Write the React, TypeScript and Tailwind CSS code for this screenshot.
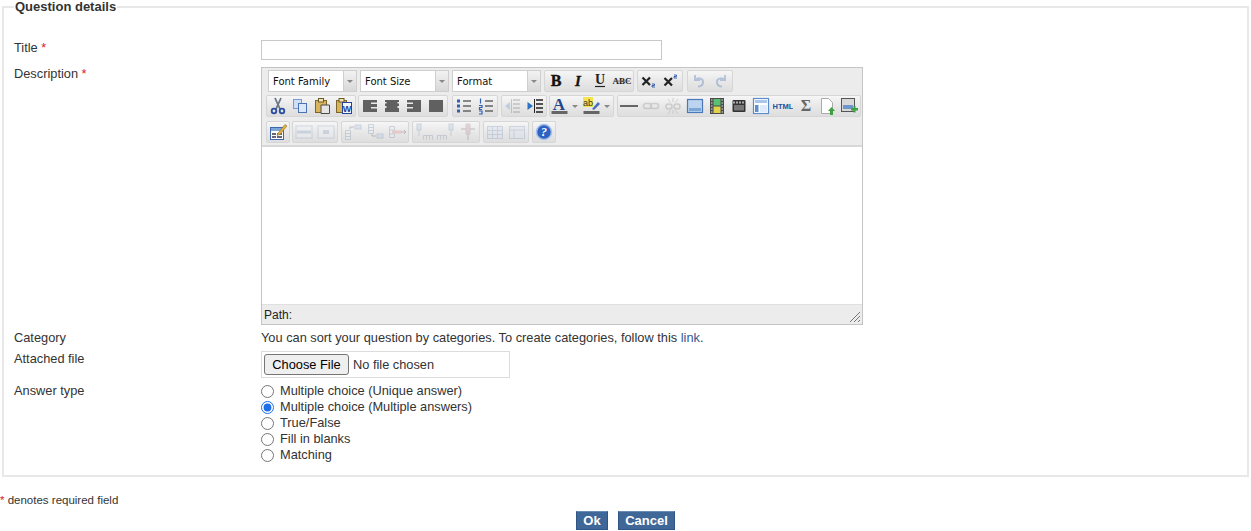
import type { ReactNode } from 'react';

// Toolbar pieces
function Group({ children }: { children: ReactNode }) {
  return (
    <div className="flex h-full items-center rounded-[2px] border border-[#d6d6d6] bg-gradient-to-b from-[#f6f6f6] via-[#e8e8e8] to-[#dedede]">
      {children}
    </div>
  );
}

function Ico({ children, off, wide }: { children: ReactNode; off?: boolean; wide?: boolean }) {
  return (
    <div className={`flex h-full shrink-0 items-center justify-center ${wide ? 'w-[31.5px] justify-start' : 'w-[22px]'} ${off ? 'opacity-30' : ''}`}>
      <svg viewBox="0 0 20 20" className="h-5 w-5 shrink-0">
        {children}
      </svg>
      {wide && <span className="ml-[2px] h-0 w-0 border-x-[3px] border-t-[3px] border-x-transparent border-t-[#888]" />}
    </div>
  );
}

function Select({ label }: { label: string }) {
  return (
    <div className="flex h-full w-[89px] border border-[#cfcfcf] bg-white">
      <div className="flex-1 pl-1 pt-px font-['DejaVu_Sans',sans-serif] text-[10px] leading-[20px] text-[#111]">{label}</div>
      <div className="flex w-[13px] items-center justify-center border-l border-[#cfcfcf] bg-gradient-to-b from-[#f2f2f2] to-[#d8d8d8]">
        <span className="h-0 w-0 border-x-[3px] border-t-[3px] border-x-transparent border-t-[#888]" />
      </div>
    </div>
  );
}

const dark = '#606060';

// Row 1
const Bold = () => <text x="10" y="15" textAnchor="middle" fontFamily="'Liberation Serif', serif" fontWeight="700" fontSize="16" fill="#111" stroke="#111" strokeWidth="0.4">B</text>;
const Italic = () => <text x="10" y="15" textAnchor="middle" fontFamily="'Liberation Serif', serif" fontWeight="700" fontStyle="italic" fontSize="15" fill="#111" stroke="#111" strokeWidth="0.3">I</text>;
const Under = () => (
  <>
    <text x="10" y="13" textAnchor="middle" fontFamily="'Liberation Serif', serif" fontWeight="700" fontSize="14" fill="#222">U</text>
    <path d="M5 15.500h10" stroke="#222" strokeWidth="1.200" />
  </>
);
const Strike = () => (
  <>
    <text x="10" y="13" textAnchor="middle" fontFamily="'Liberation Serif', serif" fontWeight="700" fontSize="9" fill="#222">ABC</text>
    <path d="M2 10h16" stroke="#666" strokeWidth="0.800" />
  </>
);
const Sub = () => (
  <>
    <path d="M3.500 6.500l7.500 7.500M11 6.500L3.500 14" stroke="#222" strokeWidth="2.200" />
    <path d="M13 13h2.500v1.500H13v1.500h3" stroke="#2a55a8" strokeWidth="0.900" fill="none" />
  </>
);
const Sup = () => (
  <>
    <path d="M3.500 7l7.500 7.500M11 7l-7.500 7.500" stroke="#222" strokeWidth="2.200" />
    <path d="M13 4h2.500v1.500H13V7h3" stroke="#2a55a8" strokeWidth="0.900" fill="none" />
  </>
);
const Undo = () => <path d="M6 4v5h5M6.500 9c3-3 8-1.500 7.500 2.500-.3 2.500-2.500 4-5 4" fill="none" stroke="#3a68b0" strokeWidth="2" />;
const Redo = () => <path d="M14 4v5H9M13.500 9c-3-3-8-1.500-7.500 2.500.3 2.500 2.500 4 5 4" fill="none" stroke="#3a68b0" strokeWidth="2" />;

// Row 2
const Cut = () => (
  <>
    <path d="M7 2l5 11M13 2L8 13" stroke="#6b7686" strokeWidth="1.800" />
    <circle cx="6" cy="15" r="2.300" fill="none" stroke="#2a4ca0" strokeWidth="1.800" />
    <circle cx="14" cy="15" r="2.300" fill="none" stroke="#2a4ca0" strokeWidth="1.800" />
  </>
);
const Copy = () => (
  <>
    <rect x="3.500" y="3.500" width="8" height="9" fill="#cfe0f6" stroke="#7c9bcc" />
    <rect x="8.500" y="7.500" width="8" height="9" fill="#dbe8fa" stroke="#4a72b5" />
  </>
);
const Paste = () => (
  <>
    <rect x="3.500" y="4.500" width="11" height="12" fill="#d9b45c" stroke="#7d6428" />
    <rect x="6.500" y="2.500" width="5" height="3.500" fill="#efe3b5" stroke="#6b5a2a" />
    <path d="M9 9h8.500v8.500H9z" fill="#e5e5e5" stroke="#4c4c4c" />
  </>
);
const PasteWord = () => (
  <>
    <rect x="2.500" y="4.500" width="10" height="12" fill="#d9b45c" stroke="#7d6428" />
    <rect x="5" y="2.500" width="5" height="3.500" fill="#efe3b5" stroke="#6b5a2a" />
    <rect x="8.500" y="6.500" width="9" height="11" fill="#f2f6fc" stroke="#26459a" />
    <text x="13" y="15.500" textAnchor="middle" fontFamily="'Liberation Sans', sans-serif" fontWeight="700" fontSize="9" fill="#1d3f9a">W</text>
  </>
);
const Align = ({ d }: { d: string }) => <path d={d} fill={dark} />;
const Left = () => <Align d="M3 4h14v12H3zM11 6.500v1.500h6V6.500zM11 11v1.500h6V11z" />;
const Center = () => <Align d="M3 4h14v2h-1.500v1.500H17V10h-1.500v2H17v4H3v-4h1.500v-2H3V7.500h1.500V6H3z" />;
const Right = () => <Align d="M3 4h14v12H3zM3 6.500v1.500h6V6.500zM3 11v1.500h6V11z" />;
const Justify = () => <Align d="M3 4h14v12H3z" />;
const Bullets = () => (
  <>
    <path d="M9 5h8M9 10h8M9 15h8" stroke="#666" strokeWidth="1.600" />
    <path d="M3 3.500h3v3H3zM3 8.500h3v3H3zM3 13.500h3v3H3z" fill="#3060b0" />
  </>
);
const Numbers = () => (
  <>
    <path d="M9 5h8M9 10h8M9 15h8" stroke="#666" strokeWidth="1.600" />
    <path d="M4.500 2.500v5M3 9.500h3v2H3.500v2H6M3 15h3v3H3" stroke="#3060b0" strokeWidth="1.200" fill="none" />
  </>
);
const Outdent = () => (
  <>
    <path d="M10 4h7M10 8h7M10 12h7M10 16h7" stroke="#666" strokeWidth="1.500" />
    <path d="M2 10l5-4v8z" fill="#5d90d8" />
    <path d="M8.500 3v14" stroke="#666" />
  </>
);
const Indent = () => (
  <>
    <path d="M11 4h7M11 8h7M11 12h7M11 16h7" stroke="#222" strokeWidth="1.500" />
    <path d="M8 10L2.500 6v8z" fill="#2a70c8" />
    <path d="M9.500 3v14" stroke="#222" />
  </>
);
const ForeColor = () => (
  <>
    <text x="9" y="13.500" textAnchor="middle" fontFamily="'Liberation Serif', serif" fontWeight="700" fontSize="17" fill="#24468c">A</text>
    <rect x="1.500" y="15" width="16" height="3" fill="#666" />
  </>
);
const BackColor = () => (
  <>
    <rect x="1" y="1" width="10" height="10" fill="#f2e64c" />
    <text x="6" y="9.500" textAnchor="middle" fontFamily="'Liberation Sans', sans-serif" fontSize="9" fill="#333">ab</text>
    <path d="M10 13l6-7 2 2-6 6z" fill="#4a6fb8" />
    <rect x="1.500" y="15" width="16" height="3" fill="#666" />
  </>
);
const Rule = () => <path d="M1 10h18" stroke="#666" strokeWidth="2" />;
const LinkIco = () => (
  <>
    <rect x="2.500" y="7.500" width="8" height="5" rx="2.500" fill="none" stroke="#8a8a8a" strokeWidth="1.500" />
    <rect x="9.500" y="7.500" width="8" height="5" rx="2.500" fill="none" stroke="#8a8a8a" strokeWidth="1.500" />
  </>
);
const Unlink = () => (
  <>
    <rect x="3" y="8" width="6" height="5" rx="2.500" fill="none" stroke="#8a8a8a" strokeWidth="1.500" />
    <rect x="11" y="8" width="6" height="5" rx="2.500" fill="none" stroke="#8a8a8a" strokeWidth="1.500" />
    <path d="M10 2v4M10 14v4M5 3l2.500 3.500M15 3l-2.500 3.500M5 18l2.500-3.500M15 18l-2.500-3.500" stroke="#8a8a8a" />
  </>
);
const Image = () => (
  <>
    <rect x="2.500" y="3.500" width="15" height="13" fill="#bcd4f0" stroke="#4a78b8" strokeWidth="1.200" />
    <rect x="4" y="12" width="12" height="3" fill="#7aa6d8" />
  </>
);
const Film = () => (
  <>
    <rect x="3" y="2" width="14" height="16" fill="#4a4a4a" />
    <rect x="6.500" y="3" width="7" height="6.500" fill="#58c070" />
    <rect x="6.500" y="10.500" width="7" height="6.500" fill="#e0d24a" />
    <path d="M4 4h1.500M4 7h1.500M4 10h1.500M4 13h1.500M4 16h1.500M14.500 4H16M14.500 7H16M14.500 10H16M14.500 13H16M14.500 16H16" stroke="#ddd" />
  </>
);
const Clapper = () => (
  <>
    <rect x="3.500" y="4" width="13" height="12" rx="1" fill="#333" />
    <path d="M5 5.500v2M8 5.500v2M11 5.500v2M14 5.500v2" stroke="#eee" strokeWidth="1.300" />
    <rect x="5" y="9" width="10" height="5.500" fill="#777" />
  </>
);
const Template = () => (
  <>
    <rect x="2.500" y="2.500" width="15" height="15" fill="#fff" stroke="#5d8ccc" strokeWidth="1.200" />
    <rect x="4" y="4" width="12" height="3" fill="#a8c6ea" />
    <rect x="4" y="9" width="3.500" height="7" fill="#5c8fcc" />
    <rect x="9" y="9" width="7" height="7" fill="#dfeaf8" />
  </>
);
const Html = () => <text x="10" y="13" textAnchor="middle" fontFamily="'Liberation Sans', sans-serif" fontWeight="700" fontSize="7.500" fill="#24509c">HTML</text>;
const Sigma = () => <text x="11" y="15" textAnchor="middle" fontFamily="'Liberation Serif', serif" fontWeight="700" fontSize="16" fill="#666">Σ</text>;
const DocAdd = () => (
  <>
    <path d="M4.500 2.500h7l4 4v11h-11z" fill="#fff" stroke="#aaa" />
    <path d="M13 19v-4h-2l3.500-4 3.500 4h-2v4z" fill="#3fa040" />
  </>
);
const ImgAdd = () => (
  <>
    <rect x="2.500" y="2.500" width="13" height="13" fill="#d8d8d8" stroke="#555" />
    <rect x="4" y="9" width="10" height="4" fill="#6f96cc" />
    <path d="M12 12h2.500v-2h2v2H19v2.500h-2.500v2h-2v-2H12z" fill="#3fa040" />
  </>
);

// Row 3
const EditHtml = () => (
  <>
    <rect x="2.500" y="5.500" width="13" height="12" fill="#fff" stroke="#3c66ad" />
    <path d="M3 6h12v3H3z" fill="#7aa6d8" />
    <path d="M4 11h4v2H4zM9 11h5v2H9zM4 14h4v2H4zM9 14h5v2H9z" fill="#667" />
    <path d="M10 11L17 2.500l2 1.500-7 8.500-3 1z" fill="#e0b040" stroke="#7d6428" strokeWidth="0.500" />
  </>
);
const Row1 = () => (
  <>
    <rect x="2" y="4" width="16" height="12" fill="#eef3fa" stroke="#8aa0c0" />
    <rect x="3" y="8.500" width="14" height="3" fill="#8aa0c0" />
  </>
);
const Cell = () => (
  <>
    <rect x="2" y="4" width="16" height="12" fill="#eef3fa" stroke="#8aa0c0" />
    <rect x="7" y="8" width="6" height="4" fill="#8aa0c0" />
  </>
);
const RowBefore = () => (
  <>
    <path d="M2.500 8.500h5v9h-5zM2.500 11.500h5M2.500 14.500h5" fill="#eef3fa" stroke="#7d8fa8" />
    <rect x="12" y="3" width="6" height="4" fill="#a8c6ea" stroke="#7d8fa8" />
    <path d="M11 5H7v2" stroke="#555" fill="none" />
  </>
);
const RowAfter = () => (
  <>
    <path d="M3.500 2.500h5v9h-5zM3.500 5.500h5M3.500 8.500h5" fill="#eef3fa" stroke="#7d8fa8" />
    <rect x="12" y="12" width="6" height="4" fill="#a8c6ea" stroke="#7d8fa8" />
    <path d="M11 14H7v-2" stroke="#555" fill="none" />
  </>
);
const RowDel = () => (
  <>
    <path d="M2.500 4.500h5v11h-5zM2.500 8h5M2.500 12h5" fill="#eef3fa" stroke="#7d8fa8" />
    <rect x="5" y="8.500" width="10" height="3" fill="#e08080" />
    <path d="M15 10h4M17 8l2 2-2 2" stroke="#555" fill="none" />
  </>
);
const ColBefore = () => (
  <>
    <rect x="3" y="2" width="4" height="6" fill="#a8c6ea" stroke="#7d8fa8" />
    <path d="M5 8v6M9.500 17.500v-4h9v4M12.500 14v3.500M15.500 14v3.500" stroke="#7d8fa8" fill="none" />
  </>
);
const ColAfter = () => (
  <>
    <rect x="13" y="2" width="4" height="6" fill="#a8c6ea" stroke="#7d8fa8" />
    <path d="M15 8v6M1.500 17.500v-4h9v4M4.500 14v3.500M7.500 14v3.500" stroke="#7d8fa8" fill="none" />
  </>
);
const ColDel = () => (
  <>
    <rect x="8" y="2" width="4" height="10" fill="#e08080" stroke="#7d8fa8" />
    <path d="M10 12v6M3 7h5M12 7h5" stroke="#555" />
  </>
);
const Split = () => (
  <>
    <rect x="2.500" y="4.500" width="15" height="12" fill="#d5e2f2" stroke="#7d97bc" />
    <path d="M7.500 5v11M12.500 5v11M3 8.500h14M3 12.500h14" stroke="#7d97bc" />
  </>
);
const Merge = () => (
  <>
    <rect x="2.500" y="4.500" width="15" height="12" fill="#d5e2f2" stroke="#7d97bc" />
    <path d="M3 8h14M7 8v8" stroke="#7d97bc" />
  </>
);
const Help = () => (
  <>
    <circle cx="10" cy="10" r="7.500" fill="#2f62c0" stroke="#a4c0ec" strokeWidth="1.500" />
    <text x="10" y="14" textAnchor="middle" fontFamily="'Liberation Serif', serif" fontWeight="700" fontStyle="italic" fontSize="12" fill="#fff">?</text>
  </>
);

function Editor() {
  return (
    <div className="w-[602px] border border-[#c4c4c4] bg-[#ececec]">
      <div className="flex h-[79px] flex-col border-b-2 border-[#d8d8d8] pl-[4px] pt-[2px]">
        <div className="flex h-[22px] gap-[3px] pl-[2px]">
          <Select label="Font Family" />
          <Select label="Font Size" />
          <Select label="Format" />
          <Group><Ico><Bold /></Ico><Ico><Italic /></Ico><Ico><Under /></Ico><Ico><Strike /></Ico></Group>
          <Group><Ico><Sub /></Ico><Ico><Sup /></Ico></Group>
          <div className="ml-px h-full"><Group><Ico off><Undo /></Ico><Ico off><Redo /></Ico></Group></div>
        </div>
        <div className="mt-[3px] flex h-[22px]">
          <Group><Ico><Cut /></Ico><Ico><Copy /></Ico><Ico><Paste /></Ico><Ico><PasteWord /></Ico></Group>
          <div className="ml-[2px] h-full"><Group><Ico><Left /></Ico><Ico><Center /></Ico><Ico><Right /></Ico><Ico><Justify /></Ico></Group></div>
          <div className="ml-[4px] h-full"><Group><Ico><Bullets /></Ico><Ico><Numbers /></Ico></Group></div>
          <div className="ml-[3px] h-full"><Group><Ico off><Outdent /></Ico><Ico><Indent /></Ico></Group></div>
          <div className="ml-[2px] h-full"><Group><Ico wide><ForeColor /></Ico><Ico wide><BackColor /></Ico></Group></div>
          <div className="ml-[3px] h-full">
            <Group>
              <Ico><Rule /></Ico><Ico off><LinkIco /></Ico><Ico off><Unlink /></Ico><Ico><Image /></Ico><Ico><Film /></Ico><Ico><Clapper /></Ico>
              <Ico><Template /></Ico><Ico><Html /></Ico><Ico><Sigma /></Ico><Ico><DocAdd /></Ico><Ico><ImgAdd /></Ico>
            </Group>
          </div>
        </div>
        <div className="mt-[4px] flex h-[22px] gap-[3px]">
          <div className="-mr-px h-full"><Group><Ico><EditHtml /></Ico></Group></div>
          <Group><Ico off><Row1 /></Ico><Ico off><Cell /></Ico></Group>
          <Group><Ico off><RowBefore /></Ico><Ico off><RowAfter /></Ico><Ico off><RowDel /></Ico></Group>
          <Group><Ico off><ColBefore /></Ico><Ico off><ColAfter /></Ico><Ico off><ColDel /></Ico></Group>
          <Group><Ico off><Split /></Ico><Ico off><Merge /></Ico></Group>
          <Group><Ico><Help /></Ico></Group>
        </div>
      </div>
      <div className="h-[157px] bg-white" />
      <div className="relative flex h-[20px] items-center border-t border-[#e0e0e0] pl-[2px] pt-px text-[12px] text-[#222]">
        Path:
        <svg viewBox="0 0 12 12" className="absolute bottom-[1px] right-[1px] h-3 w-3">
          <path d="M11 1L1 11M11 5l-6 6M11 9l-2 2" stroke="#777" strokeWidth="1" />
        </svg>
      </div>
    </div>
  );
}

function Star() {
  return <span className="text-[#e02020]">*</span>;
}

function Radio({ label, checked }: { label: string; checked?: boolean }) {
  return (
    <label className="flex h-4 items-center">
      <input type="radio" name="answer" defaultChecked={checked} className="m-0 h-[13px] w-[13px] accent-[#1f6fe8]" />
      <span className="-mt-[2px] ml-[6px]">{label}</span>
    </label>
  );
}

export default function App() {
  return (
    <div className="h-[531px] overflow-hidden bg-white font-['Liberation_Sans',Arial,sans-serif] text-[12.8px] leading-[15px] text-[#333]">
      <fieldset className="mx-[2px] border-2 border-[#e8e8e8] pb-[12px] pl-[10px] pt-[26px]">
        <legend className="px-px text-[13px] font-bold leading-[14px]">Question details</legend>
        <div className="flex h-[20px]">
          <div className="w-[247px]">Title <Star /></div>
          <div className="h-[20px] w-[401px] border border-[#c8c8c8] bg-white" />
        </div>
        <div className="mt-[7px] flex">
          <div className="w-[247px] leading-[13px]">Description <Star /></div>
          <Editor />
        </div>
        <div className="mt-[5px] flex">
          <div className="w-[247px]">Category</div>
          <div>
            You can sort your question by categories. To create categories, follow this <a className="text-[#35588f]">link</a>.
          </div>
        </div>
        <div className="mt-[6px] flex">
          <div className="w-[247px]">Attached file</div>
          <div className="flex h-[27px] w-[249px] items-center border border-[#dcdcdc] pl-[2px]">
            <button className="h-[21px] w-[85px] rounded-[3px] border border-[#767676] bg-[#efefef] text-[12.8px] text-black">Choose File</button>
            <span className="ml-[4px]">No file chosen</span>
          </div>
        </div>
        <div className="mt-[5px] flex">
          <div className="w-[247px]">Answer type</div>
          <div className="flex flex-col">
            <Radio label="Multiple choice (Unique answer)" />
            <Radio label="Multiple choice (Multiple answers)" checked />
            <Radio label="True/False" />
            <Radio label="Fill in blanks" />
            <Radio label="Matching" />
          </div>
        </div>
      </fieldset>
      <div className="mt-[17px] text-[11.5px] leading-[13px]"><Star /> denotes required field</div>
      <div className="mt-[4px] flex justify-center gap-[10px]">
        <button className="h-[19px] w-[32px] border border-[#2f5585] border-t-[#6a8bb5] bg-[#3f6899] text-[13px] font-bold leading-none text-white">Ok</button>
        <button className="h-[19px] w-[57px] border border-[#2f5585] border-t-[#6a8bb5] bg-[#3f6899] text-[13px] font-bold leading-none text-white">Cancel</button>
      </div>
    </div>
  );
}
